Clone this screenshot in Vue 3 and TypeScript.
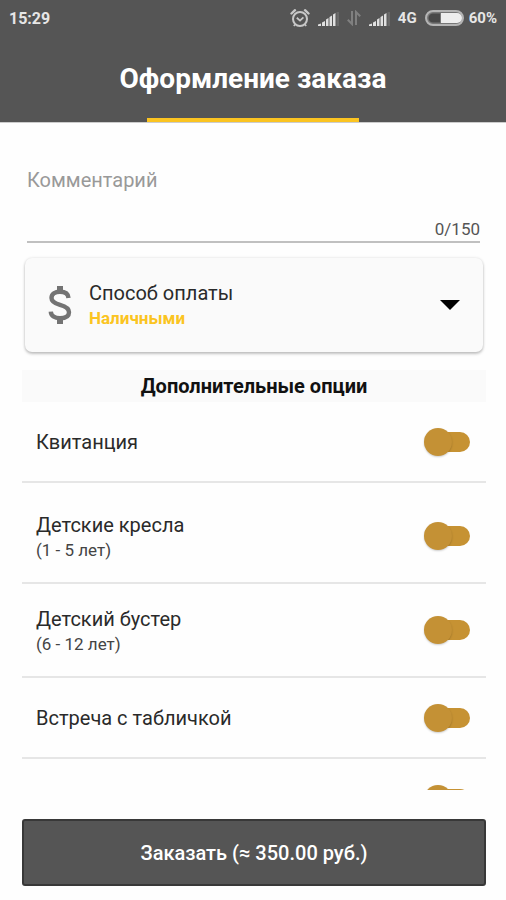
<script setup lang="ts">
import { computed, ref } from 'vue'

interface Option {
  id: string
  title: string
  note?: string
  roomy?: boolean
  enabled: boolean
}

const maxLength = 150
const comment = ref('')
const counter = computed(() => `${comment.value.length}/${maxLength}`)

const payment = ref('Наличными')

const options = ref<Option[]>([
  { id: 'receipt', title: 'Квитанция', enabled: false },
  { id: 'seat', title: 'Детские кресла', note: '(1 - 5 лет)', roomy: true, enabled: false },
  { id: 'booster', title: 'Детский бустер', note: '(6 - 12 лет)', enabled: false },
  { id: 'sign', title: 'Встреча с табличкой', enabled: false },
  { id: 'extra', title: '', enabled: false },
])

const price = '350.00'
</script>

<template>
  <div class="screen">
    <header class="top">
      <div class="status">
        <span>15:29</span>
        <div class="indicators">
          <svg class="alarm" width="20" height="20" viewBox="0 0 20 20" fill="none" stroke="currentColor" aria-hidden="true">
            <circle cx="10" cy="11" r="7" stroke-width="2" />
            <path d="M1.5 5.5 5 2.2M18.5 5.5 15 2.2" stroke-width="2.4" stroke-linecap="round" />
            <path d="M6.8 9.8 10 12.6 13.4 9.4" stroke-width="1.8" />
            <path d="M5 16.5 3.8 18M15 16.5 16.2 18" stroke-width="1.6" />
          </svg>
          <svg class="signal" width="21" height="16" viewBox="0 0 21 16" fill="currentColor" aria-hidden="true">
            <path d="M0 16V14.5L3 13.5V16zM4 16V12.5L7 11V16zM8 16V9.5L10.5 8V16zM11.5 16V7L14 5.5V16zM15 16V4.5L17.5 3V16z" />
            <path d="M18.5 16V2H21V16z" opacity=".15" />
          </svg>
          <svg class="transfer" width="14" height="16" viewBox="0 0 14 16" fill="none" stroke="currentColor" stroke-width="2" aria-hidden="true">
            <path d="M5 1V14L.8 9.8M9 15V2L13.2 6.2" />
          </svg>
          <svg class="signal" width="21" height="16" viewBox="0 0 21 16" fill="currentColor" aria-hidden="true">
            <path d="M0 16V14.5L3 13.5V16zM4 16V12.5L7 11V16zM8 16V9.5L10.5 8V16zM11.5 16V7L14 5.5V16zM15 16V4.5L17.5 3V16z" />
            <path d="M18.5 16V2H21V16z" opacity=".15" />
          </svg>
          <span>4G</span>
          <span class="battery">
            <svg width="39" height="16" viewBox="0 0 39 16" aria-hidden="true">
              <rect x="1" y="1" width="37" height="14" rx="7" fill="#777" stroke="#b4b4b4" stroke-width="2" />
              <path d="M8 3.5H15V12.5H8A4.5 4.5 0 0 1 8 3.5z" fill="#484848" />
              <path d="M16 3H32A5 5 0 0 1 32 13H16z" fill="#eee" />
            </svg>
            60%
          </span>
        </div>
      </div>
      <h1 class="title">Оформление заказа</h1>
      <div class="marker"></div>
    </header>

    <main class="content">
      <div class="comment">
        <textarea v-model="comment" class="comment-input" rows="1" :maxlength="maxLength" placeholder="Комментарий" aria-label="Комментарий"></textarea>
        <span class="counter">{{ counter }}</span>
      </div>

      <div class="payment">
        <svg class="dollar" width="24" height="38" viewBox="0 0 24 38" fill="none" stroke="currentColor" aria-hidden="true">
          <path d="M20.5 12C20.2 7.8 17 5.8 12 5.8S3.5 8 3.5 12C3.5 16 7 17.5 12 18.9S21 22.3 21 26.2S17.5 32.2 12 32.2S3 29.8 2.8 25.7" stroke-width="4.4" />
          <path d="M12 0V6M12 32V38" stroke-width="6" />
        </svg>
        <div class="payment-text">
          <label for="payment" class="label">Способ оплаты</label>
          <select id="payment" v-model="payment" class="payment-select">
            <option>Наличными</option>
          </select>
        </div>
        <svg class="arrow" width="20" height="10" viewBox="0 0 20 10" aria-hidden="true">
          <path d="M0 0H20L10 10z" />
        </svg>
      </div>

      <section class="options">
        <h2 class="options-title">Дополнительные опции</h2>
        <label v-for="option in options" :key="option.id" class="row" :class="{ noted: option.note, roomy: option.roomy }">
          <span class="row-text">
            <span class="label">{{ option.title }}</span>
            <span v-if="option.note" class="note">{{ option.note }}</span>
          </span>
          <input v-model="option.enabled" type="checkbox" role="switch" class="switch" :aria-label="option.title ? undefined : 'Опция'" />
        </label>
      </section>
    </main>

    <footer class="bottom">
      <button type="button" class="order">Заказать (≈ {{ price }} руб.)</button>
    </footer>
  </div>
</template>

<style>
body {
  background: #fefefe;
}
</style>

<style scoped>
.screen {
  display: flex;
  flex-direction: column;
  height: 100vh;
  color: #2a2a2a;
  font-family: Roboto, "Noto Sans", sans-serif;
  font-size: 20px;
}

.top {
  flex: none;
  background: #555;
  color: #fff;
  border-bottom: 1px solid #ccc;
}

.status {
  display: flex;
  align-items: center;
  justify-content: space-between;
  height: 36px;
  padding: 0 9px;
  color: #e6e6e6;
  font-size: 16px;
  font-weight: 700;
}

.indicators {
  display: flex;
  align-items: center;
  gap: 8px;
  font-size: 15px;
}

.battery {
  display: flex;
  align-items: center;
  gap: 5px;
}

.alarm {
  color: #c8c8c8;
}

.signal {
  color: #e0e0e0;
}

.transfer {
  color: #808080;
}

.title {
  margin: 0;
  padding: 26px 0 22px;
  font-size: 28px;
  line-height: 34px;
  font-weight: 700;
  text-align: center;
}

.marker {
  width: 42%;
  height: 4px;
  margin: 0 auto;
  background: #fbc421;
}

.content {
  flex: 1;
  min-height: 0;
  padding: 0 20px 0 22px;
  overflow-y: auto;
  scrollbar-width: none;
}

.comment {
  display: flex;
  flex-direction: column;
  margin: 45px 6px 0 5px;
  border-bottom: 2px solid #c0c0c0;
}

.comment-input {
  height: 49px;
  padding: 0;
  border: 0;
  outline: 0;
  background: transparent;
  color: #222;
  font: inherit;
  line-height: 24px;
  resize: none;
}

.comment-input::placeholder {
  color: #999;
  opacity: 1;
}

.counter {
  align-self: flex-end;
  color: #555;
  font-size: 17px;
  line-height: 24px;
}

.payment {
  display: flex;
  align-items: center;
  margin: 15px 3px 18px;
  padding: 23px;
  border-radius: 7px;
  background: #fafafa;
  box-shadow: 0 2px 3px rgba(0, 0, 0, 0.22), 0 0 3px rgba(0, 0, 0, 0.12);
}

.dollar {
  color: #737373;
}

.payment-text {
  display: flex;
  flex: 1;
  flex-direction: column;
  gap: 2px;
  margin-left: 17px;
}

.label {
  line-height: 24px;
}

.payment-select {
  padding: 0;
  border: 0;
  outline: 0;
  appearance: none;
  background: transparent;
  color: #fbc421;
  font: inherit;
  font-size: 17px;
  font-weight: 700;
  line-height: 22px;
}

.arrow {
  pointer-events: none;
}

.options-title {
  margin: 0;
  background: #fafafa;
  color: #111;
  font-size: 20px;
  line-height: 32px;
  font-weight: 700;
  text-align: center;
}

.row {
  display: flex;
  align-items: center;
  justify-content: space-between;
  min-height: 79px;
  padding: 0 16px 0 14px;
  border-bottom: 2px solid #e6e6e6;
}

.noted {
  min-height: 92px;
}

.noted .row-text {
  gap: 1px;
  padding-top: 3px;
}

.roomy {
  padding-top: 7px;
}

.row-text {
  display: flex;
  flex-direction: column;
}

.note {
  color: #444;
  font-size: 17px;
  line-height: 24px;
}

.switch {
  position: relative;
  display: flex;
  align-items: center;
  width: 46px;
  height: 28px;
  margin: 0;
  appearance: none;
}

.switch::before {
  content: "";
  position: absolute;
  inset: 4px 0 4px 8px;
  border-radius: 10px;
  background: #c69233;
}

.switch::after {
  content: "";
  position: relative;
  width: 28px;
  height: 28px;
  border-radius: 50%;
  background: #c49135;
  box-shadow: 0 1px 2px rgba(0, 0, 0, 0.2);
}

.switch:checked::after {
  margin-left: auto;
}

.bottom {
  flex: none;
  padding: 29px 20px 14px 22px;
}

.order {
  width: 100%;
  height: 67px;
  border: 2px solid #383838;
  border-radius: 3px;
  background: #555;
  color: #fff;
  font: inherit;
  font-weight: 500;
}
</style>
